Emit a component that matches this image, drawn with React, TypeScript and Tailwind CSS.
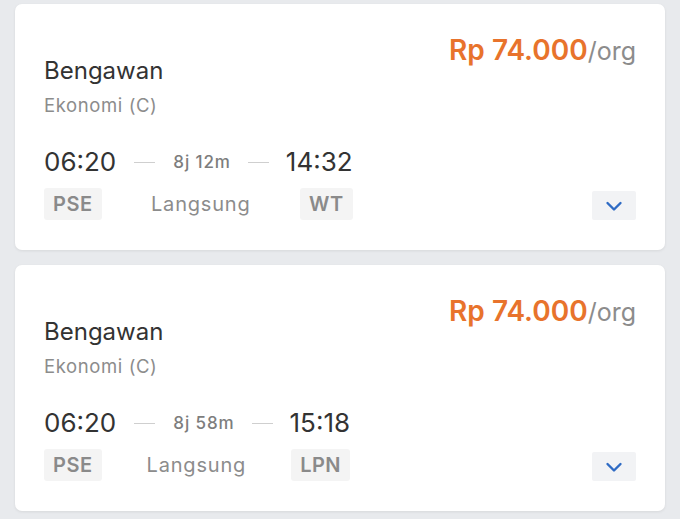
import React from "react";

type Trip = {
  name: string;
  kelas: string;
  price: string;
  depart: string;
  arrive: string;
  duration: string;
  from: string;
  to: string;
};

const trips: Trip[] = [
  {
    name: "Bengawan",
    kelas: "Ekonomi (C)",
    price: "Rp 74.000",
    depart: "06:20",
    arrive: "14:32",
    duration: "8j 12m",
    from: "PSE",
    to: "WT",
  },
  {
    name: "Bengawan",
    kelas: "Ekonomi (C)",
    price: "Rp 74.000",
    depart: "06:20",
    arrive: "15:18",
    duration: "8j 58m",
    from: "PSE",
    to: "LPN",
  },
];

function Chevron() {
  return (
    <svg width="18" height="12" viewBox="0 0 18 12" fill="none">
      <path
        d="M2.5 3 L9 9.5 L15.5 3"
        stroke="#2f6bc4"
        strokeWidth="2.4"
        strokeLinecap="round"
        strokeLinejoin="round"
      />
    </svg>
  );
}

function TripCard({ trip }: { trip: Trip }) {
  return (
    <div className="flex rounded-[7px] bg-white px-[29px] pt-[29px] pb-[30px] shadow-[0_1px_3px_rgba(0,0,0,0.08)]">
      {/* kiri: nama kereta, kelas, jadwal */}
      <div className="flex flex-1 flex-col">
        <div className="mt-[23px] text-[24px] leading-[30px] text-[#333]">{trip.name}</div>
        <div className="mt-[7px] text-[18.5px] leading-[24px] tracking-[0.6px] text-[#8c8c8c]">{trip.kelas}</div>
        <div className="mt-[29px] inline-flex w-fit flex-col">
          <div className="flex items-center">
            <span className="text-[26px] leading-[32px] text-[#333]">{trip.depart}</span>
            <span className="mx-[18px] h-px w-[21px] bg-[#cfcfcf]" />
            <span className="text-[17px] font-medium leading-[32px] tracking-[0.9px] text-[#7d7d7d]">{trip.duration}</span>
            <span className="mx-[17px] h-px w-[21px] bg-[#cfcfcf]" />
            <span className="text-[26px] leading-[32px] text-[#333]">{trip.arrive}</span>
          </div>
          <div className="mt-[10px] flex items-center justify-between">
            <span className="flex h-[32px] items-center rounded-[3px] bg-[#f4f4f4] px-[9px] text-[20px] font-semibold tracking-[0.5px] text-[#8a8a8a]">
              {trip.from}
            </span>
            <span className="text-[20px] tracking-[0.8px] text-[#8c8c8c]">Langsung</span>
            <span className="flex h-[32px] items-center rounded-[3px] bg-[#f4f4f4] px-[9px] text-[20px] font-semibold tracking-[0.5px] text-[#8a8a8a]">
              {trip.to}
            </span>
          </div>
        </div>
      </div>
      {/* kanan: harga + tombol */}
      <div className="flex flex-col items-end justify-between">
        <div className="flex items-baseline leading-[34px]">
          <span className="text-[28px] font-semibold text-[#e8732c]">{trip.price}</span>
          <span className="text-[25px] text-[#8c8c8c]">/org</span>
        </div>
        <button className="flex h-[29px] w-[44px] items-center justify-center rounded-[2px] bg-[#f2f3f5]">
          <Chevron />
        </button>
      </div>
    </div>
  );
}

export default function App() {
  return (
    <div
      className="min-h-screen bg-[#e8eaed] px-[15px] pt-[4px] pb-[6px]"
      style={{ fontFamily: "Inter, 'Liberation Sans', sans-serif" }}
    >
      <div className="flex flex-col gap-[15px]">
        {trips.map((t, i) => (
          <TripCard key={i} trip={t} />
        ))}
      </div>
    </div>
  );
}
